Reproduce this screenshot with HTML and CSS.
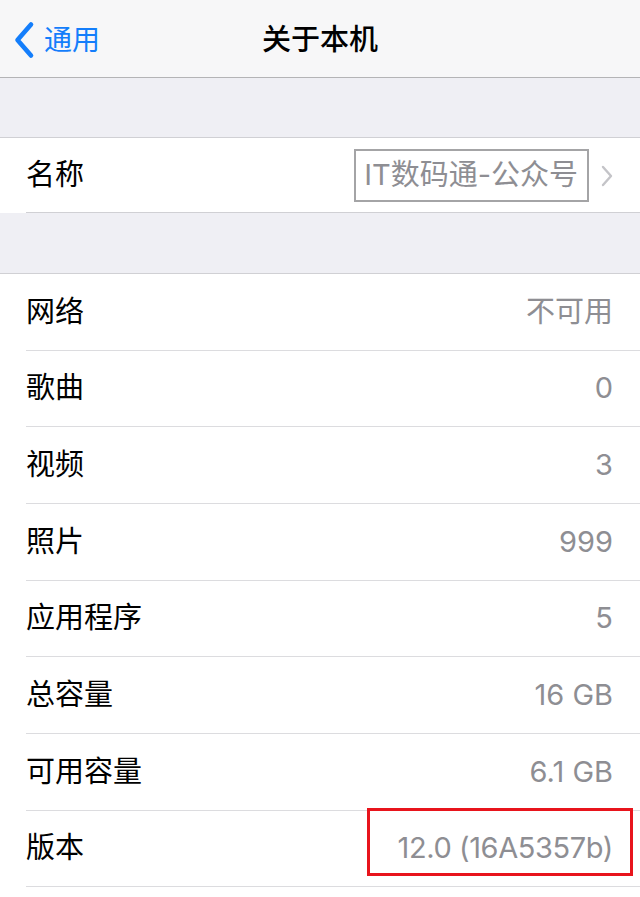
FILE: index.html
```html
<!DOCTYPE html>
<html lang="zh-CN">
<head>
<meta charset="utf-8">
<title>关于本机</title>
<link rel="stylesheet" href="styles.css">
</head>
<body>
<div class="screen">
  <header class="nav">
    <div class="back">
      <svg class="back-icon" width="24" height="40" viewBox="0 0 24 40" aria-hidden="true">
        <path d="M20 4.5 L6.5 20 L20 35.5" fill="none" stroke="#147efb" stroke-width="4.6" stroke-linecap="round" stroke-linejoin="round"/>
      </svg>
      <span class="back-text">通用</span>
    </div>
    <div class="title">关于本机</div>
  </header>

  <div class="gap gap-top"></div>

  <section class="group">
    <div class="row name-row">
      <div class="row-inner">
        <span class="label">名称</span>
        <span class="name-value">
          <span class="name-box">IT数码通-公众号</span>
          <svg class="chev" width="14" height="24" viewBox="0 0 14 24" aria-hidden="true">
            <path d="M3 3 L11 12 L3 21" fill="none" stroke="#c4c4c8" stroke-width="2.4" stroke-linecap="round" stroke-linejoin="round"/>
          </svg>
        </span>
      </div>
    </div>
  </section>

  <div class="gap gap-mid"></div>

  <section class="group list">
    <div class="row"><div class="row-inner"><span class="label">网络</span><span class="value">不可用</span></div></div>
    <div class="row"><div class="row-inner"><span class="label">歌曲</span><span class="value">0</span></div></div>
    <div class="row"><div class="row-inner"><span class="label">视频</span><span class="value">3</span></div></div>
    <div class="row"><div class="row-inner"><span class="label">照片</span><span class="value">999</span></div></div>
    <div class="row"><div class="row-inner"><span class="label">应用程序</span><span class="value">5</span></div></div>
    <div class="row"><div class="row-inner"><span class="label">总容量</span><span class="value">16 GB</span></div></div>
    <div class="row"><div class="row-inner"><span class="label">可用容量</span><span class="value">6.1 GB</span></div></div>
    <div class="row"><div class="row-inner version"><span class="label">版本</span><span class="value version-value">12.0 (16A5357b)</span><span class="highlight"></span></div></div>
  </section>
</div>
</body>
</html>
```

FILE: styles.css
```css
* { box-sizing: border-box; }

html, body {
  margin: 0;
  padding: 0;
  background: #ffffff;
}

body {
  font-family: "Inter", "Noto Sans CJK SC", "Noto Sans", sans-serif;
  color: #000;
  width: 640px;
  height: 897px;
  overflow: hidden;
}

.screen {
  width: 640px;
  display: flex;
  flex-direction: column;
}

.nav {
  height: 78px;
  background: #f7f7f8;
  border-bottom: 1px solid #b4b4b6;
  position: relative;
  display: flex;
  align-items: center;
  justify-content: center;
}

.back {
  position: absolute;
  left: 11px;
  top: 20px;
  display: flex;
  align-items: center;
  gap: 9px;
  color: #147efb;
  font-size: 28px;
  line-height: 40px;
}

.back-icon { display: block; }

.title {
  font-size: 29px;
  font-weight: 500;
  line-height: 40px;
  margin-top: 2px;
}

.gap {
  background: #efeff4;
  border-bottom: 1px solid #d0d0d4;
}
.gap-top { height: 60px; }
.gap-mid { height: 61px; }

.group { background: #fff; }

.row {
  padding-left: 26px;
  font-size: 29px;
}

.row-inner {
  height: 76.67px;
  border-bottom: 1px solid #dcdcdf;
  display: flex;
  align-items: center;
  justify-content: space-between;
  padding-right: 27px;
  position: relative;
}

.name-row .row-inner {
  height: 75px;
  border-bottom: 1px solid #d0d0d4;
  padding-right: 26px;
}

.label { line-height: 40px; }

.value {
  color: #8e8e93;
  line-height: 40px;
}

.version-value { letter-spacing: -0.4px; }

.name-value {
  display: flex;
  align-items: center;
  gap: 11px;
}

.name-box {
  color: #8e8e93;
  border: 2px solid #a4a4a6;
  height: 53px;
  line-height: 48px;
  padding: 0 9px 0 8px;
  display: block;
}

.chev { display: block; margin-top: 1px; }

.highlight {
  position: absolute;
  right: 7px;
  top: -3px;
  width: 266px;
  height: 68px;
  border: 3px solid #e8141c;
  pointer-events: none;
}
```
